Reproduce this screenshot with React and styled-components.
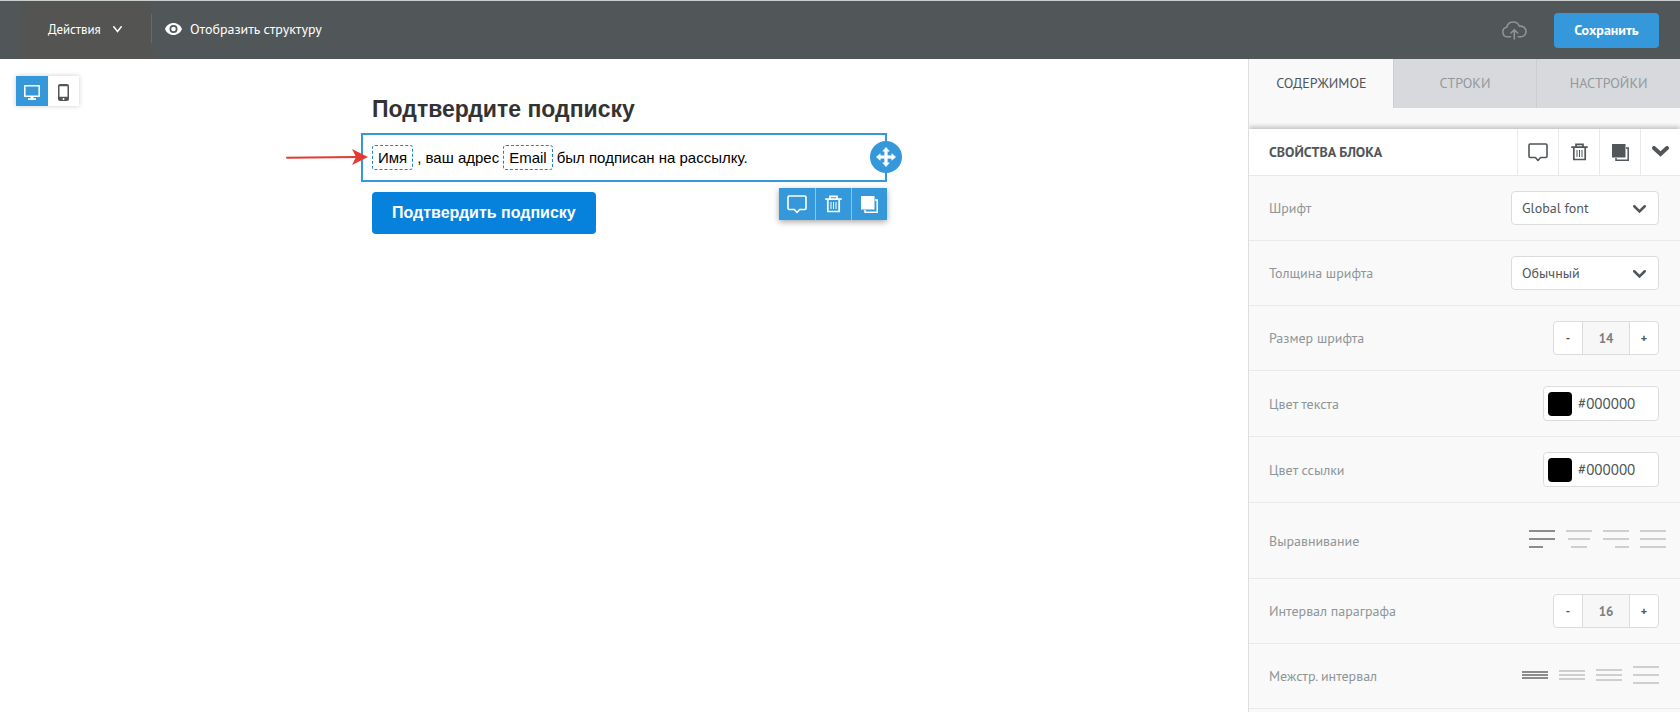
import React, { useState } from "react";
import styled, { createGlobalStyle, css } from "styled-components";

const c = {
  bar: "#515658",
  blue: "#3498db",
  ink: "#505659",
  muted: "#8f9698",
  panel: "#f9f9f9",
  line: "#e9e9e9",
  field: "#dcdcdc",
};

const GlobalStyle = createGlobalStyle`
  *, *::before, *::after { box-sizing: border-box; }
  body { margin: 0; background: #fff; }
  body, button, input, select { font-family: "PT Sans", "Noto Sans", sans-serif; font-size: 14px; }
  button { padding: 0; border: 0; background: none; color: inherit; cursor: pointer; }
  svg { display: block; }
`;

const Page = styled.div`
  display: flex;
  flex-direction: column;
  min-height: 100vh;
`;

const TopBar = styled.header`
  display: flex;
  align-items: stretch;
  height: 59px;
  border-top: 1px solid #c9cfcd;
  background: ${c.bar};
  color: #fff;
`;

const ActionsButton = styled.button`
  display: flex;
  align-items: center;
  gap: 12px;
  width: 130px;
  margin-left: 21px;
  padding: 0 0 2px 27px;
  background: #545453;
  font-size: 13px;
`;

const BarDivider = styled.span`
  width: 1px;
  height: 29px;
  margin-top: 13px;
  background: #666a6b;
`;

const StructureButton = styled.button`
  display: flex;
  align-items: center;
  gap: 8px;
  padding: 0 13px 2px;
`;

const BarEnd = styled.div`
  display: flex;
  align-items: center;
  gap: 27px;
  margin-left: auto;
  padding-right: 21px;
  color: #8f9496;
`;

const SaveButton = styled.button`
  width: 105px;
  height: 35px;
  border-radius: 4px;
  background: ${c.blue};
  color: #fff;
  font-weight: 700;
`;

const Workspace = styled.div`
  display: flex;
  flex: 1;
`;

const Canvas = styled.main`
  position: relative;
  flex: 1;
  display: flex;
  justify-content: center;
  align-items: flex-start;
`;

const DeviceSwitch = styled.div`
  position: absolute;
  left: 16px;
  top: 17px;
  display: flex;
  box-shadow: 0 0 5px rgba(0, 0, 0, 0.2);
`;

const DeviceButton = styled.button`
  display: grid;
  place-items: center;
  width: ${(p) => (p.$on ? 32 : 31)}px;
  height: 30px;
  padding-top: 3px;
  background: ${(p) => (p.$on ? c.blue : "#fff")};
  color: ${(p) => (p.$on ? "#fff" : c.ink)};
`;

const Letter = styled.article`
  width: 526px;
  margin-top: 35px;
  font-family: "Liberation Sans", Arial, sans-serif;
`;

const Title = styled.h1`
  margin: 0 0 9px;
  padding: 0 11px;
  color: #333;
  font-size: 23px;
  line-height: 30px;
`;

const SelectedBlock = styled.section`
  position: relative;
  height: 49px;
  padding: 10px 9px;
  border: 2px solid ${c.blue};
`;

const Sentence = styled.p`
  display: flex;
  align-items: center;
  gap: 4px;
  margin: 0;
  color: #000;
  font-size: 15px;
  white-space: nowrap;
`;

const Chip = styled.span`
  height: 25px;
  padding: 0 5px;
  border: 1px dashed #1485d4;
  border-radius: 3px;
  line-height: 23px;
`;

const MoveHandle = styled.button`
  position: absolute;
  right: -17px;
  top: 6px;
  display: grid;
  place-items: center;
  width: 32px;
  height: 32px;
  border-radius: 50%;
  background: ${c.blue};
  color: #fff;
`;

const BlockTools = styled.div`
  position: absolute;
  right: -2px;
  top: 53px;
  display: flex;
  box-shadow: 0 2px 6px rgba(0, 0, 0, 0.35);
`;

const ToolButton = styled.button`
  display: grid;
  place-items: center;
  width: 36px;
  height: 32px;
  background: ${c.blue};
  color: #fff;
  & + & {
    border-left: 1px solid #8cc4ea;
  }
`;

const Arrow = styled.svg`
  position: absolute;
  left: -78px;
  top: 13px;
`;

const ConfirmLink = styled.a`
  display: inline-block;
  margin: 10px 11px;
  padding: 0 20px;
  border-radius: 4px;
  background: #0782dc;
  color: #fff;
  font-size: 16px;
  font-weight: 700;
  line-height: 42px;
  text-decoration: none;
`;

const Panel = styled.aside`
  width: 432px;
  border-left: 1px solid #dddedf;
  background: ${c.panel};
`;

const Tabs = styled.div`
  display: flex;
  margin-bottom: 21px;
`;

const Tab = styled.button`
  flex: 1;
  height: 49px;
  padding-bottom: 2px;
  color: #93989b;
  background: #d7d9dd;
  border-left: 1px solid #cbcdd0;
  ${(p) =>
    p.$on &&
    css`
      color: ${c.ink};
      background: ${c.panel};
      border-left-color: ${c.panel};
    `}
`;

const BlockHeader = styled.div`
  display: flex;
  align-items: stretch;
  height: 47px;
  border-bottom: 1px solid ${c.line};
  background: #fff;
  color: ${c.ink};
  box-shadow: 0 -2px 5px rgba(0, 0, 0, 0.25);
  clip-path: inset(-8px 0 0 0);
`;

const BlockTitle = styled.h2`
  flex: 1;
  margin: 0;
  padding-left: 20px;
  font-size: 14px;
  line-height: 47px;
`;

const HeaderButton = styled.button`
  display: grid;
  place-items: center;
  width: ${(p) => (p.$last ? 40 : 41)}px;
  border-left: 1px solid ${c.line};
`;

const Row = styled.div`
  display: flex;
  align-items: center;
  justify-content: space-between;
  min-height: ${(p) => (p.$tall ? 76 : 65)}px;
  padding: 15px 21px 15px 20px;
  border-bottom: 1px solid ${c.line};
  color: ${c.muted};
`;

const SelectBox = styled.div`
  position: relative;
  svg {
    position: absolute;
    right: 13px;
    top: 14px;
    color: ${c.ink};
    pointer-events: none;
  }
`;

const Select = styled.select`
  appearance: none;
  width: 148px;
  height: 34px;
  padding: 0 10px;
  border: 1px solid ${c.field};
  border-radius: 4px;
  background: #fff;
  color: ${c.ink};
`;

const StepperBox = styled.div`
  display: flex;
  height: 34px;
  border: 1px solid ${c.field};
  border-radius: 4px;
  background: #fff;
  overflow: hidden;
  color: ${c.ink};
`;

const StepButton = styled.button`
  width: 28px;
  padding-bottom: 2px;
  font-size: 12px;
  font-weight: 700;
`;

const StepValue = styled.input`
  width: 48px;
  padding: 0;
  border: solid ${c.field};
  border-width: 0 1px;
  background: #f7f7f7;
  color: #7b7f81;
  font-size: 13px;
  font-weight: 700;
  text-align: center;
`;

const ColorBox = styled.div`
  display: flex;
  align-items: center;
  gap: 6px;
  width: 116px;
  height: 35px;
  padding: 0 4px;
  border: 1px solid ${c.field};
  border-radius: 4px;
  background: #fff;
`;

const Swatch = styled.button`
  flex: none;
  width: 24px;
  height: 24px;
  border-radius: 4px;
  background: ${(p) => p.$color};
`;

const HexInput = styled.input`
  width: 70px;
  padding: 0;
  border: 0;
  background: none;
  color: ${c.ink};
  font-size: 15px;
`;

const Choices = styled.div`
  display: flex;
  gap: 11px;
  margin-right: ${(p) => (p.$wide ? -7 : 0)}px;
  padding-bottom: ${(p) => (p.$wide ? 4 : 2)}px;
`;

const Choice = styled.label`
  color: ${(p) => (p.$on ? "#8a8c8d" : "#cfcfcf")};
  cursor: pointer;
  input {
    position: absolute;
    opacity: 0;
    pointer-events: none;
  }
`;

const CommentIcon = () => (
  <svg width="20" height="19" viewBox="0 0 20 19" fill="none" stroke="currentColor" strokeWidth="1.6" strokeLinejoin="round">
    <path d="M2.2 1h15.6c.7 0 1.2.5 1.2 1.2v11.1c0 .7-.5 1.2-1.2 1.2H12.600l-2.600 3-2.600-3H2.200c-.7 0-1.200-.5-1.200-1.200V2.200C1 1.500 1.500 1 2.200 1z" />
  </svg>
);

const TrashIcon = () => (
  <svg width="17" height="18" viewBox="0 0 17 18" fill="none" stroke="currentColor">
    <path strokeWidth="1.7" d="M.3 4.200h16.400M5 4V1.400h7V4M2.800 4.500v12h11.400v-12" />
    <path strokeWidth="1" d="M6 7v7M8.500 7v7M11 7v7" />
  </svg>
);

const CopyIcon = () => (
  <svg width="17" height="17" viewBox="0 0 17 17" fill="none">
    <path fill="currentColor" d="M0 0h13.500v13.500H0z" />
    <path stroke="currentColor" strokeWidth="1.5" d="M14 4h2.200v12.200H4V14" />
  </svg>
);

const Chevron = ({ width, height, stroke }) => (
  <svg width={width} height={height} viewBox={`0 0 ${width} ${height}`} fill="none" stroke="currentColor" strokeWidth={stroke}>
    <path d={`M${stroke / 2} ${stroke / 2}L${width / 2} ${height - stroke}L${width - stroke / 2} ${stroke / 2}`} strokeLinecap="round" />
  </svg>
);

const EyeIcon = () => (
  <svg width="17" height="12" viewBox="0 0 17 12">
    <path fill="#fff" fillRule="evenodd" d="M8.500 0C4.600 0 1.300 2.400 0 6c1.300 3.600 4.600 6 8.500 6s7.200-2.400 8.500-6c-1.300-3.600-4.600-6-8.500-6zm0 10a4 4 0 1 1 0-8 4 4 0 0 1 0 8z" />
    <circle cx="8.5" cy="6" r="2.3" fill="#fff" />
  </svg>
);

const CloudIcon = () => (
  <svg width="25" height="19" viewBox="0 0 25 19" fill="none" stroke="currentColor" strokeWidth="1.6" strokeLinecap="round" strokeLinejoin="round">
    <path d="M8.500 15.800H5.600A4.800 4.800 0 0 1 4.700 6.300C5.400 3.200 8 1 11.200 1c2.900 0 5.200 1.600 6.200 4.200 3.700-.4 6.600 2 6.600 5.200 0 3-2.300 5.400-5.200 5.400h-2.600" />
    <path d="M12.300 18V9M9 12l3.300-3.300 3.300 3.300" />
  </svg>
);

const MonitorIcon = () => (
  <svg width="16" height="15" viewBox="0 0 16 15">
    <path fill="currentColor" fillRule="evenodd" d="M1 0h14c.6 0 1 .4 1 1v10c0 .6-.4 1-1 1H9.500v1.200H12V15H4v-1.800h2.500V12H1c-.6 0-1-.4-1-1V1c0-.6.4-1 1-1zm.6 1.600v8.800h12.800V1.600z" />
  </svg>
);

const PhoneIcon = () => (
  <svg width="11" height="17" viewBox="0 0 11 17">
    <path fill="currentColor" fillRule="evenodd" d="M2 0h7c1.100 0 2 .9 2 2v13c0 1.100-.9 2-2 2H2c-1.100 0-2-.9-2-2V2C0 .9.900 0 2 0zm-.5 2.200v10.600h8V2.200zM5.500 14a1 1 0 1 0 0 2 1 1 0 0 0 0-2z" />
  </svg>
);

const MoveIcon = () => (
  <svg width="20" height="20" viewBox="0 0 20 20" fill="currentColor" stroke="currentColor" strokeWidth="0.6" strokeLinejoin="round">
    <path d="M10 .4l3.300 3.800h-2v4.500h4.500v-2L19.600 10l-3.800 3.300v-2h-4.500v4.500h2L10 19.600l-3.300-3.800h2v-4.500H4.200v2L.4 10l3.800-3.300v2h4.500V4.200h-2z" />
  </svg>
);

const LinesIcon = ({ lines, height }) => (
  <svg width="26" height={height} viewBox={`0 0 26 ${height}`} fill="currentColor">
    {lines.map(([x, y, w]) => (
      <rect key={y} x={x} y={y} width={w} height="2" />
    ))}
  </svg>
);

const alignments = [
  ["По левому краю", [[0, 0, 26], [0, 8, 26], [0, 16, 14]]],
  ["По центру", [[0, 0, 26], [2, 8, 22], [5, 16, 16]]],
  ["По правому краю", [[0, 0, 26], [0, 8, 26], [12, 16, 14]]],
  ["По ширине", [[0, 0, 26], [0, 8, 26], [0, 16, 26]]],
];

const spacings = [
  ["1", [[0, 5, 26], [0, 8, 26], [0, 11, 26]]],
  ["1.2", [[0, 4, 26], [0, 8, 26], [0, 12, 26]]],
  ["1.5", [[0, 3, 26], [0, 8, 26], [0, 13, 26]]],
  ["2", [[0, 0, 26], [0, 8, 26], [0, 16, 26]]],
];

function SelectRow({ id, label, value }) {
  return (
    <Row>
      <label htmlFor={id}>{label}</label>
      <SelectBox>
        <Select id={id} defaultValue={value}>
          <option>{value}</option>
        </Select>
        <Chevron width={13} height={9} stroke={2.5} />
      </SelectBox>
    </Row>
  );
}

function StepperRow({ id, label, initial }) {
  const [value, setValue] = useState(initial);
  return (
    <Row>
      <label htmlFor={id}>{label}</label>
      <StepperBox>
        <StepButton type="button" onClick={() => setValue(value - 1)}>-</StepButton>
        <StepValue id={id} value={value} onChange={(e) => setValue(Number(e.target.value) || 0)} />
        <StepButton type="button" onClick={() => setValue(value + 1)}>+</StepButton>
      </StepperBox>
    </Row>
  );
}

function ColorRow({ id, label }) {
  const [color, setColor] = useState("#000000");
  return (
    <Row>
      <label htmlFor={id}>{label}</label>
      <ColorBox>
        <Swatch type="button" $color={color} aria-label={label} />
        <HexInput id={id} value={color} onChange={(e) => setColor(e.target.value)} />
      </ColorBox>
    </Row>
  );
}

function ChoiceRow({ name, label, options, tall }) {
  const [picked, setPicked] = useState(0);
  return (
    <Row $tall={tall}>
      <span id={name}>{label}</span>
      <Choices role="radiogroup" aria-labelledby={name} $wide={tall}>
        {options.map(([title, lines], i) => (
          <Choice key={title} $on={i === picked}>
            <input type="radio" name={name} aria-label={title} checked={i === picked} onChange={() => setPicked(i)} />
            <LinesIcon lines={lines} height={18} />
          </Choice>
        ))}
      </Choices>
    </Row>
  );
}

export default function App() {
  const [tab, setTab] = useState(0);
  return (
    <Page>
      <GlobalStyle />
      <TopBar>
        <ActionsButton type="button">
          Действия
          <Chevron width={9} height={7} stroke={1.5} />
        </ActionsButton>
        <BarDivider />
        <StructureButton type="button">
          <EyeIcon />
          Отобразить структуру
        </StructureButton>
        <BarEnd>
          <CloudIcon />
          <SaveButton type="button">Сохранить</SaveButton>
        </BarEnd>
      </TopBar>
      <Workspace>
        <Canvas>
          <DeviceSwitch>
            <DeviceButton type="button" $on aria-label="Компьютер"><MonitorIcon /></DeviceButton>
            <DeviceButton type="button" aria-label="Телефон"><PhoneIcon /></DeviceButton>
          </DeviceSwitch>
          <Letter>
            <Title>Подтвердите подписку</Title>
            <SelectedBlock>
              <Sentence>
                <Chip>Имя</Chip>
                <span>, ваш адрес</span>
                <Chip>Email</Chip>
                <span>был подписан на рассылку.</span>
              </Sentence>
              <Arrow width="84" height="18" viewBox="0 0 84 18">
                <path d="M2 9.800L72 9" stroke="#e33b30" strokeWidth="2" strokeLinecap="round" />
                <path d="M83 9L67 1l4 8-4 8z" fill="#e33b30" />
              </Arrow>
              <MoveHandle type="button" aria-label="Переместить"><MoveIcon /></MoveHandle>
              <BlockTools>
                <ToolButton type="button" aria-label="Комментарий"><CommentIcon /></ToolButton>
                <ToolButton type="button" aria-label="Удалить"><TrashIcon /></ToolButton>
                <ToolButton type="button" aria-label="Дублировать"><CopyIcon /></ToolButton>
              </BlockTools>
            </SelectedBlock>
            <ConfirmLink href="#confirm">Подтвердить подписку</ConfirmLink>
          </Letter>
        </Canvas>
        <Panel>
          <Tabs>
            {["СОДЕРЖИМОЕ", "СТРОКИ", "НАСТРОЙКИ"].map((name, i) => (
              <Tab key={name} type="button" $on={i === tab} onClick={() => setTab(i)}>{name}</Tab>
            ))}
          </Tabs>
          <BlockHeader>
            <BlockTitle>СВОЙСТВА БЛОКА</BlockTitle>
            <HeaderButton type="button" aria-label="Комментарий"><CommentIcon /></HeaderButton>
            <HeaderButton type="button" aria-label="Удалить"><TrashIcon /></HeaderButton>
            <HeaderButton type="button" aria-label="Дублировать"><CopyIcon /></HeaderButton>
            <HeaderButton type="button" $last aria-label="Свернуть"><Chevron width={17} height={12} stroke={4} /></HeaderButton>
          </BlockHeader>
          <SelectRow id="font" label="Шрифт" value="Global font" />
          <SelectRow id="weight" label="Толщина шрифта" value="Обычный" />
          <StepperRow id="size" label="Размер шрифта" initial={14} />
          <ColorRow id="text-color" label="Цвет текста" />
          <ColorRow id="link-color" label="Цвет ссылки" />
          <ChoiceRow name="align" label="Выравнивание" options={alignments} tall />
          <StepperRow id="paragraph" label="Интервал параграфа" initial={16} />
          <ChoiceRow name="leading" label="Межстр. интервал" options={spacings} />
        </Panel>
      </Workspace>
    </Page>
  );
}
